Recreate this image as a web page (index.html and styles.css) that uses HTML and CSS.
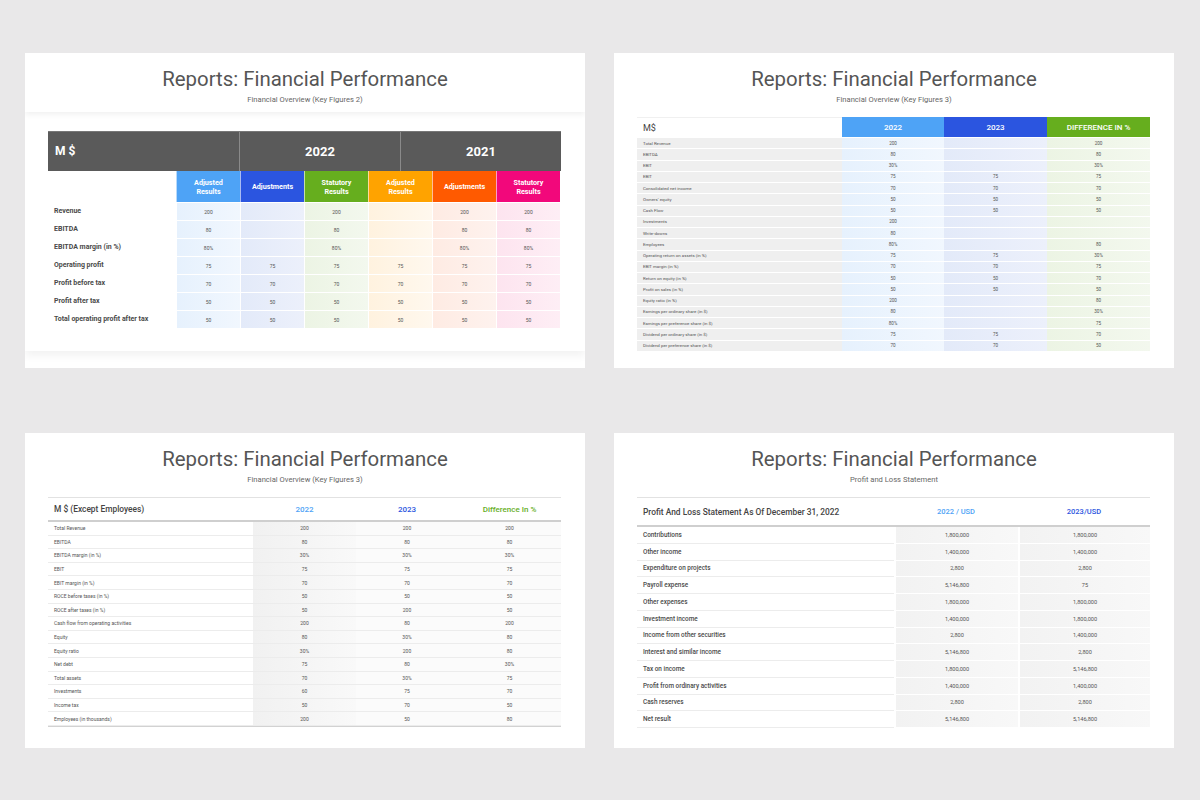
FILE: index.html
```html
<!DOCTYPE html>
<html lang="en">
<head>
<meta charset="utf-8">
<title>Reports: Financial Performance</title>
<link rel="stylesheet" href="styles.css">
</head>
<body>
<div class="board">

  <!-- Slide 1 -->
  <section class="slide s1">
    <header class="head head-band">
      <h1 class="title">Reports: Financial Performance</h1>
      <p class="subtitle">Financial Overview (Key Figures 2)</p>
    </header>
    <div class="band-body">
      <div class="t1">
        <div class="t1-top">
          <div class="t1-ms">M $</div>
          <div class="t1-year">2022</div>
          <div class="t1-year">2021</div>
        </div>
        <div class="t1-grid">
          <div class="t1-blank"></div>
          <div class="t1-h c1">Adjusted<br>Results</div>
          <div class="t1-h c2">Adjustments</div>
          <div class="t1-h c3">Statutory<br>Results</div>
          <div class="t1-h c4">Adjusted<br>Results</div>
          <div class="t1-h c5">Adjustments</div>
          <div class="t1-h c6">Statutory<br>Results</div>

          <div class="t1-l">Revenue</div>
          <div class="t1-v d1">200</div><div class="t1-v d2"></div><div class="t1-v d3">200</div><div class="t1-v d4"></div><div class="t1-v d5">200</div><div class="t1-v d6">200</div>
          <div class="t1-l">EBITDA</div>
          <div class="t1-v d1">80</div><div class="t1-v d2"></div><div class="t1-v d3">80</div><div class="t1-v d4"></div><div class="t1-v d5">80</div><div class="t1-v d6">80</div>
          <div class="t1-l">EBITDA margin (in %)</div>
          <div class="t1-v d1">80%</div><div class="t1-v d2"></div><div class="t1-v d3">80%</div><div class="t1-v d4"></div><div class="t1-v d5">80%</div><div class="t1-v d6">80%</div>
          <div class="t1-l">Operating profit</div>
          <div class="t1-v d1">75</div><div class="t1-v d2">75</div><div class="t1-v d3">75</div><div class="t1-v d4">75</div><div class="t1-v d5">75</div><div class="t1-v d6">75</div>
          <div class="t1-l">Profit before tax</div>
          <div class="t1-v d1">70</div><div class="t1-v d2">70</div><div class="t1-v d3">70</div><div class="t1-v d4">70</div><div class="t1-v d5">70</div><div class="t1-v d6">70</div>
          <div class="t1-l">Profit after tax</div>
          <div class="t1-v d1">50</div><div class="t1-v d2">50</div><div class="t1-v d3">50</div><div class="t1-v d4">50</div><div class="t1-v d5">50</div><div class="t1-v d6">50</div>
          <div class="t1-l">Total operating profit after tax</div>
          <div class="t1-v d1">50</div><div class="t1-v d2">50</div><div class="t1-v d3">50</div><div class="t1-v d4">50</div><div class="t1-v d5">50</div><div class="t1-v d6">50</div>
        </div>
      </div>
    </div>
  </section>

  <!-- Slide 2 -->
  <section class="slide s2">
    <header class="head">
      <h1 class="title">Reports: Financial Performance</h1>
      <p class="subtitle">Financial Overview (Key Figures 3)</p>
    </header>
    <div class="t2">
      <div class="t2-ms">M$</div>
      <div class="t2-h c1">2022</div>
      <div class="t2-h c2">2023</div>
      <div class="t2-h c3">DIFFERENCE IN %</div>

      <div class="t2-l">Total Revenue</div><div class="t2-v d1">200</div><div class="t2-v d2"></div><div class="t2-v d3">200</div>
      <div class="t2-l">EBITDA</div><div class="t2-v d1">80</div><div class="t2-v d2"></div><div class="t2-v d3">80</div>
      <div class="t2-l">EBIT</div><div class="t2-v d1">30%</div><div class="t2-v d2"></div><div class="t2-v d3">30%</div>
      <div class="t2-l">EBIT</div><div class="t2-v d1">75</div><div class="t2-v d2">75</div><div class="t2-v d3">75</div>
      <div class="t2-l">Consolidated net income</div><div class="t2-v d1">70</div><div class="t2-v d2">70</div><div class="t2-v d3">70</div>
      <div class="t2-l">Owners' equity</div><div class="t2-v d1">50</div><div class="t2-v d2">50</div><div class="t2-v d3">50</div>
      <div class="t2-l">Cash Flow</div><div class="t2-v d1">50</div><div class="t2-v d2">50</div><div class="t2-v d3">50</div>
      <div class="t2-l">Investments</div><div class="t2-v d1">200</div><div class="t2-v d2"></div><div class="t2-v d3"></div>
      <div class="t2-l">Write-downs</div><div class="t2-v d1">80</div><div class="t2-v d2"></div><div class="t2-v d3"></div>
      <div class="t2-l">Employees</div><div class="t2-v d1">80%</div><div class="t2-v d2"></div><div class="t2-v d3">80</div>
      <div class="t2-l">Operating return on assets (in %)</div><div class="t2-v d1">75</div><div class="t2-v d2">75</div><div class="t2-v d3">30%</div>
      <div class="t2-l">EBIT margin (in %)</div><div class="t2-v d1">70</div><div class="t2-v d2">70</div><div class="t2-v d3">75</div>
      <div class="t2-l">Return on equity (in %)</div><div class="t2-v d1">50</div><div class="t2-v d2">50</div><div class="t2-v d3">70</div>
      <div class="t2-l">Profit on sales (in %)</div><div class="t2-v d1">50</div><div class="t2-v d2">50</div><div class="t2-v d3">50</div>
      <div class="t2-l">Equity ratio (in %)</div><div class="t2-v d1">200</div><div class="t2-v d2"></div><div class="t2-v d3">80</div>
      <div class="t2-l">Earnings per ordinary share (in $)</div><div class="t2-v d1">80</div><div class="t2-v d2"></div><div class="t2-v d3">30%</div>
      <div class="t2-l">Earnings per preference share (in $)</div><div class="t2-v d1">80%</div><div class="t2-v d2"></div><div class="t2-v d3">75</div>
      <div class="t2-l">Dividend per ordinary share (in $)</div><div class="t2-v d1">75</div><div class="t2-v d2">75</div><div class="t2-v d3">70</div>
      <div class="t2-l">Dividend per preference share (in $)</div><div class="t2-v d1">70</div><div class="t2-v d2">70</div><div class="t2-v d3">50</div>
    </div>
  </section>

  <!-- Slide 3 -->
  <section class="slide s3">
    <header class="head">
      <h1 class="title">Reports: Financial Performance</h1>
      <p class="subtitle">Financial Overview (Key Figures 3)</p>
    </header>
    <div class="t3">
      <div class="t3-hl">M $ (Except Employees)</div>
      <div class="t3-h k1">2022</div>
      <div class="t3-h k2">2023</div>
      <div class="t3-h k3">Difference In %</div>

      <div class="t3-l">Total Revenue</div><div class="t3-v g1">200</div><div class="t3-v">200</div><div class="t3-v">200</div>
      <div class="t3-l">EBITDA</div><div class="t3-v g1">80</div><div class="t3-v">80</div><div class="t3-v">80</div>
      <div class="t3-l">EBITDA margin (in %)</div><div class="t3-v g1">30%</div><div class="t3-v">30%</div><div class="t3-v">30%</div>
      <div class="t3-l">EBIT</div><div class="t3-v g1">75</div><div class="t3-v">75</div><div class="t3-v">75</div>
      <div class="t3-l">EBIT margin (in %)</div><div class="t3-v g1">70</div><div class="t3-v">70</div><div class="t3-v">70</div>
      <div class="t3-l">ROCE before taxes (in %)</div><div class="t3-v g1">50</div><div class="t3-v">50</div><div class="t3-v">50</div>
      <div class="t3-l">ROCE after taxes (in %)</div><div class="t3-v g1">50</div><div class="t3-v">200</div><div class="t3-v">50</div>
      <div class="t3-l">Cash flow from operating activities</div><div class="t3-v g1">200</div><div class="t3-v">80</div><div class="t3-v">200</div>
      <div class="t3-l">Equity</div><div class="t3-v g1">80</div><div class="t3-v">30%</div><div class="t3-v">80</div>
      <div class="t3-l">Equity ratio</div><div class="t3-v g1">30%</div><div class="t3-v">200</div><div class="t3-v">80</div>
      <div class="t3-l">Net debt</div><div class="t3-v g1">75</div><div class="t3-v">80</div><div class="t3-v">30%</div>
      <div class="t3-l">Total assets</div><div class="t3-v g1">70</div><div class="t3-v">30%</div><div class="t3-v">75</div>
      <div class="t3-l">Investments</div><div class="t3-v g1">60</div><div class="t3-v">75</div><div class="t3-v">70</div>
      <div class="t3-l">Income tax</div><div class="t3-v g1">50</div><div class="t3-v">70</div><div class="t3-v">50</div>
      <div class="t3-l">Employees (in thousands)</div><div class="t3-v g1">200</div><div class="t3-v">50</div><div class="t3-v">80</div>
    </div>
  </section>

  <!-- Slide 4 -->
  <section class="slide s4">
    <header class="head">
      <h1 class="title">Reports: Financial Performance</h1>
      <p class="subtitle">Profit and Loss Statement</p>
    </header>
    <div class="t4">
      <div class="t4-hl">Profit And Loss Statement As Of December 31, 2022</div>
      <div class="t4-h k1">2022 / USD</div>
      <div class="t4-h k2">2023/USD</div>

      <div class="t4-l">Contributions</div><div class="t4-v">1,800,000</div><div class="t4-v">1,800,000</div>
      <div class="t4-l">Other income</div><div class="t4-v">1,400,000</div><div class="t4-v">1,400,000</div>
      <div class="t4-l">Expenditure on projects</div><div class="t4-v">2,800</div><div class="t4-v">2,800</div>
      <div class="t4-l">Payroll expense</div><div class="t4-v">5,146,800</div><div class="t4-v">75</div>
      <div class="t4-l">Other expenses</div><div class="t4-v">1,800,000</div><div class="t4-v">1,800,000</div>
      <div class="t4-l">Investment income</div><div class="t4-v">1,400,000</div><div class="t4-v">1,800,000</div>
      <div class="t4-l">Income from other securities</div><div class="t4-v">2,800</div><div class="t4-v">1,400,000</div>
      <div class="t4-l">Interest and similar income</div><div class="t4-v">5,146,800</div><div class="t4-v">2,800</div>
      <div class="t4-l">Tax on income</div><div class="t4-v">1,800,000</div><div class="t4-v">5,146,800</div>
      <div class="t4-l">Profit from ordinary activities</div><div class="t4-v">1,400,000</div><div class="t4-v">1,400,000</div>
      <div class="t4-l">Cash reserves</div><div class="t4-v">2,800</div><div class="t4-v">2,800</div>
      <div class="t4-l">Net result</div><div class="t4-v">5,146,800</div><div class="t4-v">5,146,800</div>
    </div>
  </section>

</div>
</body>
</html>
```

FILE: styles.css
```css
* { box-sizing: border-box; }

html, body {
  margin: 0;
  padding: 0;
  background: #e9e8e9;
  font-family: Roboto, "Liberation Sans", Arial, sans-serif;
  color: #444;
}

.board {
  display: grid;
  grid-template-columns: 560px 560px;
  grid-template-rows: 315px 315px;
  column-gap: 29px;
  row-gap: 65px;
  padding: 53px 26px 0 25px;
}

.slide {
  background: #fff;
  display: flex;
  flex-direction: column;
  overflow: hidden;
}

.head {
  text-align: center;
  padding-top: 13px;
}

.title {
  margin: 0;
  font-size: 20.4px;
  line-height: 26px;
  font-weight: 400;
  color: #555;
}

.subtitle {
  margin: 3px 0 0;
  font-size: 7.6px;
  line-height: 10px;
  color: #666;
}

/* ---------- Slide 1 ---------- */
.head-band {
  height: 59px;
  flex: none;
  position: relative;
  z-index: 1;
  background: #fff;
  box-shadow: 0 3px 5px rgba(0, 0, 0, 0.05);
}

.band-body {
  height: 238px;
  flex: none;
  margin-top: 1px;
  padding: 18px 24px 0 23px;
  background: #fff;
  box-shadow: 0 5px 8px rgba(0, 0, 0, 0.05);
}

.t1 { width: 513px; }

.t1-top {
  display: flex;
  height: 40px;
  background: #5a5a5a;
  color: #fff;
  font-weight: 700;
  border-top: 1px solid #777;
}

.t1-ms {
  width: 192px;
  font-size: 12px;
  line-height: 39px;
  padding-left: 7px;
  border-right: 1px solid #8a8a8a;
}

.t1-year {
  width: 160px;
  text-align: center;
  font-size: 13px;
  line-height: 39px;
}
.t1-year + .t1-year {
  width: 161px;
  border-left: 1px solid #8a8a8a;
}

.t1-grid {
  display: grid;
  grid-template-columns: 128px repeat(6, 64px);
  grid-template-rows: 31px repeat(7, 18px);
}

.t1-blank { background: #fff; }

.t1-h {
  display: flex;
  align-items: center;
  justify-content: center;
  text-align: center;
  color: #fff;
  font-size: 7.2px;
  line-height: 9px;
  font-weight: 700;
  border-left: 1px solid rgba(255, 255, 255, 0.6);
}

.c1 { background: #4ea3f6; }
.c2 { background: #2b55e0; }
.c3 { background: #66ae1e; }
.c4 { background: #ffa300; }
.c5 { background: #ff5a00; }
.c6 { background: #f2087b; }

.d1 { background: linear-gradient(90deg, #e6f1fd, #f1f7fe); }
.d2 { background: linear-gradient(90deg, #e3eaf9, #ecf0fb); }
.d3 { background: linear-gradient(90deg, #ecf4e4, #f3f8ee); }
.d4 { background: linear-gradient(90deg, #fff2df, #fff8ee); }
.d5 { background: linear-gradient(90deg, #feebe3, #fef2ee); }
.d6 { background: linear-gradient(90deg, #fde4ef, #feeef5); }

.t1-l {
  font-size: 7px;
  font-weight: 700;
  color: #4a4a4a;
  padding-left: 6px;
  display: flex;
  align-items: center;
}

.t1-v {
  font-size: 5px;
  color: #555;
  display: flex;
  align-items: center;
  justify-content: center;
  border-top: 1px solid #fff;
  border-left: 1px solid #fff;
}

/* ---------- Slide 2 ---------- */
.t2 {
  margin: 12px 24px 0 23px;
  display: grid;
  grid-template-columns: 205px 102px 103px 103px;
  grid-template-rows: 20px;
  grid-auto-rows: 11.25px;
}

.t2-ms {
  font-size: 9px;
  color: #444;
  padding-left: 6px;
  display: flex;
  align-items: center;
  border-top: 1px solid #f0f0f0;
}

.t2-h {
  color: #fff;
  font-size: 8px;
  font-weight: 500;
  display: flex;
  align-items: center;
  justify-content: center;
}

.t2-l {
  background: #efefef;
  border-top: 1px solid #fff;
  font-size: 4.4px;
  color: #555;
  padding-left: 6px;
  display: flex;
  align-items: center;
}

.t2-v {
  font-size: 4.6px;
  color: #555;
  border-top: 1px solid #fff;
  display: flex;
  align-items: center;
  justify-content: center;
}

/* ---------- Slide 3 ---------- */
.t3 {
  margin: 12px 24px 0 23px;
  display: grid;
  grid-template-columns: 205px 103px 102px 103px;
  grid-template-rows: 24px;
  grid-auto-rows: 13.6px;
  border-top: 1px solid #e2e2e2;
  border-bottom: 1px solid #d2d2d2;
}

.t3-hl, .t3-h {
  border-bottom: 2px solid #cfcfcf;
  display: flex;
  align-items: center;
  font-weight: 500;
}

.t3-hl {
  font-size: 8.4px;
  color: #444;
  padding-left: 6px;
}

.t3-h {
  justify-content: center;
  font-size: 8px;
}

.k1 { color: #4ea3f6; }
.k2 { color: #2b55e0; }
.k3 { color: #66ae1e; }

.t3-l {
  font-size: 5px;
  color: #555;
  padding-left: 6px;
  display: flex;
  align-items: center;
  border-bottom: 1px solid #ececec;
}

.t3-v {
  font-size: 5px;
  color: #555;
  display: flex;
  align-items: center;
  justify-content: center;
  border-bottom: 1px solid #ececec;
  background: #fbfbfb;
}

.t3-v.g1 { background: linear-gradient(90deg, #f1f1f1, #f9f9f9); }

/* ---------- Slide 4 ---------- */
.t4 {
  margin: 12px 24px 0 23px;
  display: grid;
  grid-template-columns: 257px 124px 132px;
  grid-template-rows: 29px;
  grid-auto-rows: 16.75px;
  border-top: 1px solid #e2e2e2;
}

.t4-hl, .t4-h {
  border-bottom: 2px solid #cfcfcf;
  display: flex;
  align-items: center;
  font-weight: 500;
}

.t4-hl {
  font-size: 8.4px;
  color: #444;
  padding-left: 6px;
}

.t4-h {
  justify-content: center;
  font-size: 7.5px;
}

.t4-l {
  font-size: 6.4px;
  font-weight: 500;
  color: #4a4a4a;
  padding-left: 6px;
  display: flex;
  align-items: center;
  border-bottom: 1px solid #ececec;
}

.t4-v {
  font-size: 5.6px;
  color: #555;
  display: flex;
  align-items: center;
  justify-content: center;
  border-bottom: 1px solid #fff;
  border-left: 2px solid #fff;
  background: linear-gradient(90deg, #f2f2f2, #f8f8f8);
}
```
